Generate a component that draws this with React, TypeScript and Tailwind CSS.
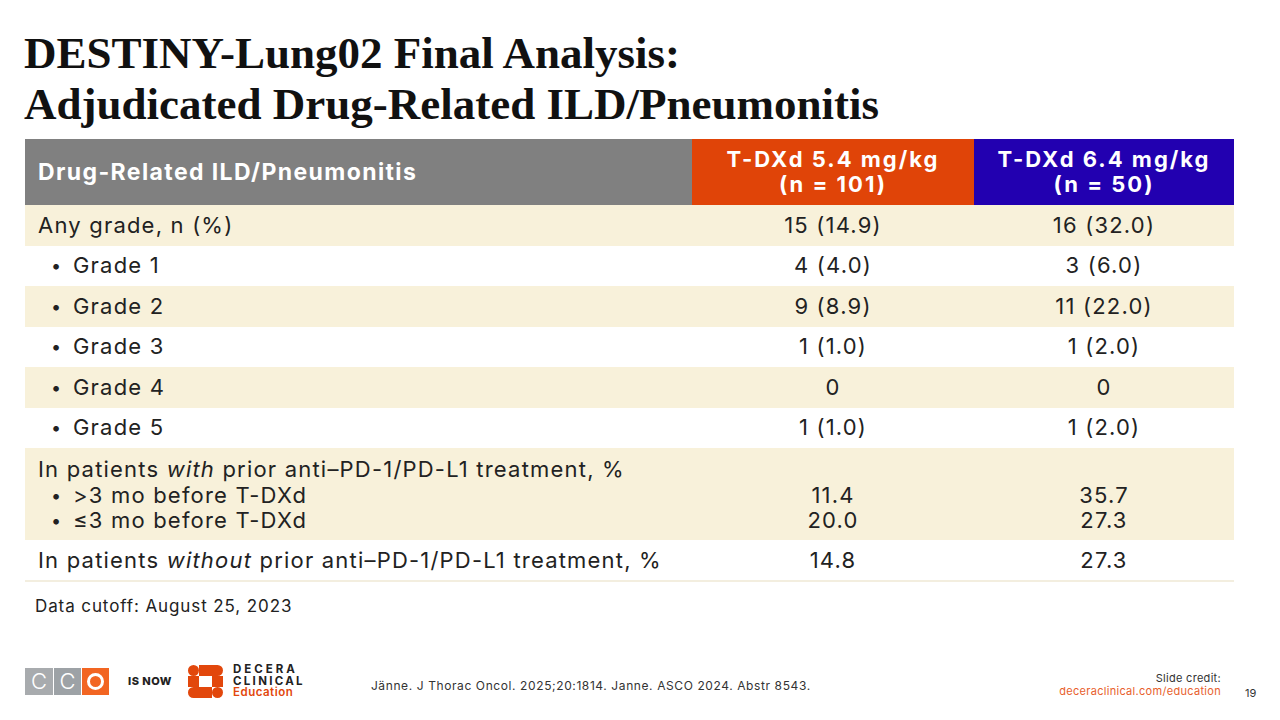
import React from 'react';

const sans = { fontFamily: 'Inter, "Noto Sans", sans-serif' };

type Row = { label: React.ReactNode; a: string; b: string; bullet?: boolean; shade: boolean };

const rows: Row[] = [
    { label: 'Any grade, n (%)', a: '15 (14.9)', b: '16 (32.0)', shade: true },
    { label: 'Grade 1', a: '4 (4.0)', b: '3 (6.0)', bullet: true, shade: false },
    { label: 'Grade 2', a: '9 (8.9)', b: '11 (22.0)', bullet: true, shade: true },
    { label: 'Grade 3', a: '1 (1.0)', b: '1 (2.0)', bullet: true, shade: false },
    { label: 'Grade 4', a: '0', b: '0', bullet: true, shade: true },
    { label: 'Grade 5', a: '1 (1.0)', b: '1 (2.0)', bullet: true, shade: false },
];

function DeceraMark() {
    return (
        <svg width="35" height="33" viewBox="0 0 35 33">
            <g fill="#e2470c">
                <circle cx="5.5" cy="5.5" r="5.5" />
                <path d="M11 0 H29.5 A5.5 5.5 0 0 1 29.5 11 H11 Z" />
                <rect x="0" y="11" width="11" height="11" />
                <rect x="24" y="11" width="11" height="11" />
                <path d="M24 22 H5.5 A5.5 5.5 0 0 0 5.5 33 H24 Z" />
                <circle cx="29.5" cy="27.5" r="5.5" />
            </g>
        </svg>
    );
}

function Bullet() {
    return <span className="w-[35px] pl-[13px] text-[18px] tracking-normal">•</span>;
}

export default function App() {
    return (
        <div className="w-[1280px] h-[720px] bg-white text-[#222] relative overflow-hidden" style={sans}>
            <div
                className="pt-[28px] pl-[24px] text-[45px] font-bold leading-[51px] text-[#111]"
                style={{ fontFamily: '"Liberation Serif", "DejaVu Serif", serif' }}
            >
                <div>DESTINY-Lung02 Final Analysis:</div>
                <div>Adjudicated Drug-Related ILD/Pneumonitis</div>
            </div>

            <div className="ml-[25px] mt-[9px] w-[1209px] text-[22px] tracking-[1.2px]">
                <div className="grid grid-cols-[667px_282px_260px] h-[66px] text-white font-bold">
                    <div className="bg-[#808080] flex items-center pl-[13px] text-[23px] tracking-[1.4px]">Drug-Related ILD/Pneumonitis</div>
                    <div className="bg-[#e04408] flex flex-col items-center justify-center leading-[25px] tracking-[2px]">
                        <span>T-DXd 5.4 mg/kg</span>
                        <span>(n = 101)</span>
                    </div>
                    <div className="bg-[#2200b0] flex flex-col items-center justify-center leading-[25px] tracking-[2px]">
                        <span>T-DXd 6.4 mg/kg</span>
                        <span>(n = 50)</span>
                    </div>
                </div>

                {rows.map((r, i) => (
                    <div
                        key={i}
                        className={`grid grid-cols-[667px_282px_260px] h-[40.5px] items-center ${r.shade ? 'bg-[#f8f1da]' : 'bg-white'}`}
                    >
                        <div className="pl-[13px] flex items-center">
                            {r.bullet && <Bullet />}
                            <span>{r.label}</span>
                        </div>
                        <div className="text-center">{r.a}</div>
                        <div className="text-center">{r.b}</div>
                    </div>
                ))}

                <div className="grid grid-cols-[667px_282px_260px] h-[92px] bg-[#f8f1da] pt-[7px] leading-[25px]">
                    <div className="pl-[13px]">
                        <div className="leading-[28px]">
                            In patients <i>with</i> prior anti–PD-1/PD-L1 treatment, %
                        </div>
                        <div className="flex">
                            <Bullet />
                            <span>&gt;3 mo before T-DXd</span>
                        </div>
                        <div className="flex">
                            <Bullet />
                            <span>≤3 mo before T-DXd</span>
                        </div>
                    </div>
                    <div className="text-center pt-[28px]">
                        <div>11.4</div>
                        <div>20.0</div>
                    </div>
                    <div className="text-center pt-[28px]">
                        <div>35.7</div>
                        <div>27.3</div>
                    </div>
                </div>

                <div className="grid grid-cols-[667px_282px_260px] h-[42px] items-center border-b-2 border-[#f3eedf]">
                    <div className="pl-[13px]">
                        In patients <i>without</i> prior anti–PD-1/PD-L1 treatment, %
                    </div>
                    <div className="text-center">14.8</div>
                    <div className="text-center">27.3</div>
                </div>
            </div>

            <div className="ml-[35px] mt-[12px] text-[17px] tracking-[0.9px]">Data cutoff: August 25, 2023</div>

            <div className="absolute left-[25px] right-0 top-[664px] flex items-center">
                <div className="flex h-[27px]">
                    <div className="w-[28px] bg-[#a8abae] flex items-center justify-center text-white text-[22px] font-light leading-none">C</div>
                    <div className="w-[27px] ml-px bg-[#9da2a6] flex items-center justify-center text-white text-[22px] font-light leading-none">C</div>
                    <div className="w-[27px] ml-px bg-[#f26522] flex items-center justify-center">
                        <span className="w-[17px] h-[17px] rounded-full border-[3px] border-white" />
                    </div>
                </div>
                <div className="ml-[19px] text-[11px] font-extrabold tracking-[0.5px] text-[#222]">IS NOW</div>
                <div className="ml-[16px]">
                    <DeceraMark />
                </div>
                <div className="ml-[10px] flex flex-col text-[11.5px] leading-[11.5px] font-bold">
                    <span className="tracking-[3px] text-[#222]">DECERA</span>
                    <span className="tracking-[2.3px] text-[#222]">CLINICAL</span>
                    <span className="text-[#e2470c] font-semibold tracking-[0.5px]">Education</span>
                </div>
                <div className="ml-[66px] mt-[10px] text-[12px] tracking-[0.6px] text-[#333]">
                    Jänne. J Thorac Oncol. 2025;20:1814. Janne. ASCO 2024. Abstr 8543.
                </div>
                <div className="ml-auto mr-[59px] mt-[8px] flex flex-col items-end text-[11px] leading-[13px] tracking-[0.3px]">
                    <span className="text-[#333]">Slide credit:</span>
                    <span className="text-[#e8602c]">deceraclinical.com/education</span>
                </div>
            </div>
            <div className="absolute left-[1245px] top-[685px] text-[11px] text-[#333]">19</div>
        </div>
    );
}
